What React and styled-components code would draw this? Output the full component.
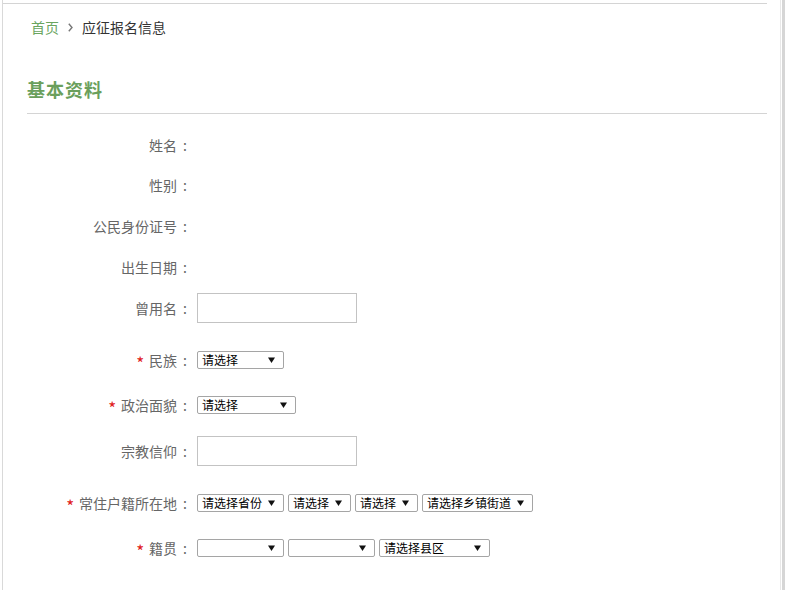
import React from 'react';
import styled, { createGlobalStyle } from 'styled-components';

const GlobalStyle = createGlobalStyle`
  html, body {
    margin: 0;
    padding: 0;
    background: #fff;
  }
  body {
    font-family: "Noto Sans CJK SC", "Noto Sans", sans-serif;
    font-size: 14px;
    color: #666;
  }
`;

const Page = styled.div`
  display: flex;
  height: 100vh;
  overflow: hidden;
`;

const Panel = styled.div`
  flex: 1;
  margin-left: 2px;
  border-left: 1px solid #d9d9d9;
  padding-right: 13px;
`;

const Edge = styled.div`
  width: 5px;
  background: linear-gradient(to right, #e8e8e8 0 1px, #fff 1px 2px, #d6d6d6 2px 5px);
`;

const Inner = styled.div`
  margin-top: 3px;
  border-top: 1px solid #d4d4d4;
  padding: 13px 0 0 24px;
`;

const Crumbs = styled.div`
  display: flex;
  align-items: center;
  height: 20px;
  line-height: 20px;
  padding-left: 4px;
  font-size: 14px;
`;

const CrumbLink = styled.a`
  color: #6aa55f;
  text-decoration: none;
`;

const CrumbCurrent = styled.span`
  color: #333;
`;

const Chevron = styled.svg`
  margin: 0 9px;
`;

const SectionTitle = styled.h2`
  margin: 40px 0 0;
  padding-bottom: 12px;
  line-height: 24px;
  font-size: 18px;
  font-weight: bold;
  letter-spacing: 1px;
  color: #6a9f5c;
  border-bottom: 1px solid #d4d4d4;
`;

const Form = styled.div`
  display: flex;
  flex-direction: column;
  padding-top: 21px;
`;

const Row = styled.div`
  display: flex;
  align-items: center;
  height: ${(p) => p.$h}px;
  margin-top: ${(p) => p.$gap}px;
`;

const Label = styled.div`
  width: 160px;
  flex: none;
  text-align: right;
  line-height: 20px;
  color: #666;
  white-space: nowrap;
`;

const Star = styled.span`
  display: inline-block;
  color: #e02020;
  font-size: 17px;
  line-height: 14px;
  vertical-align: -4px;
  margin-right: 5px;
`;

const Colon = styled.span`
  margin-left: 6px;
`;

const Field = styled.div`
  display: flex;
  gap: 4px;
  margin-left: 10px;
`;

const TextInput = styled.input`
  box-sizing: border-box;
  width: 160px;
  height: 30px;
  border: 1px solid #c3c3c3;
  padding: 0 4px;
  outline: none;
`;

const SelectBox = styled.div`
  box-sizing: border-box;
  display: flex;
  align-items: center;
  justify-content: space-between;
  width: ${(p) => p.$w}px;
  height: 18px;
  padding: 0 8px 0 4px;
  border: 1px solid #a5a5a5;
  border-radius: 2px;
  font-size: 12px;
  line-height: 16px;
  color: #000;
  white-space: nowrap;
`;

function Select({ w, text }) {
  return (
    <SelectBox $w={w}>
      <span>{text}</span>
      <svg width="7" height="6" viewBox="0 0 7 6">
        <path d="M0 0.5h7L3.5 6z" fill="#111" />
      </svg>
    </SelectBox>
  );
}

const fields = [
  { label: '姓名', h: 20, gap: 0 },
  { label: '性别', h: 20, gap: 20 },
  { label: '公民身份证号', h: 20, gap: 21 },
  { label: '出生日期', h: 20, gap: 21 },
  { label: '曾用名', h: 30, gap: 16, input: true },
  { label: '民族', h: 18, gap: 28, required: true, selects: [{ w: 87, text: '请选择' }] },
  { label: '政治面貌', h: 18, gap: 27, required: true, selects: [{ w: 99, text: '请选择' }] },
  { label: '宗教信仰', h: 30, gap: 22, input: true },
  {
    label: '常住户籍所在地',
    h: 18,
    gap: 28,
    required: true,
    selects: [
      { w: 87, text: '请选择省份' },
      { w: 63, text: '请选择' },
      { w: 63, text: '请选择' },
      { w: 111, text: '请选择乡镇街道' },
    ],
  },
  {
    label: '籍贯',
    h: 18,
    gap: 27,
    required: true,
    selects: [
      { w: 87, text: '' },
      { w: 87, text: '' },
      { w: 111, text: '请选择县区' },
    ],
  },
];

export default function App() {
  return (
    <>
      <GlobalStyle />
      <Page>
        <Panel>
          <Inner>
            <Crumbs>
              <CrumbLink href="#">首页</CrumbLink>
              <Chevron width="5" height="9" viewBox="0 0 5 9">
                <path d="M0.8 0.8L4 4.5L0.8 8.2" fill="none" stroke="#777" strokeWidth="1.4" />
              </Chevron>
              <CrumbCurrent>应征报名信息</CrumbCurrent>
            </Crumbs>
            <SectionTitle>基本资料</SectionTitle>
            <Form>
              {fields.map((f) => (
                <Row key={f.label} $h={f.h} $gap={f.gap}>
                  <Label>
                    {f.required && <Star>*</Star>}
                    {f.label}
                    <Colon>:</Colon>
                  </Label>
                  {(f.input || f.selects) && (
                    <Field>
                      {f.input && <TextInput type="text" />}
                      {f.selects &&
                        f.selects.map((s, i) => <Select key={i} w={s.w} text={s.text} />)}
                    </Field>
                  )}
                </Row>
              ))}
            </Form>
          </Inner>
        </Panel>
        <Edge />
      </Page>
    </>
  );
}
